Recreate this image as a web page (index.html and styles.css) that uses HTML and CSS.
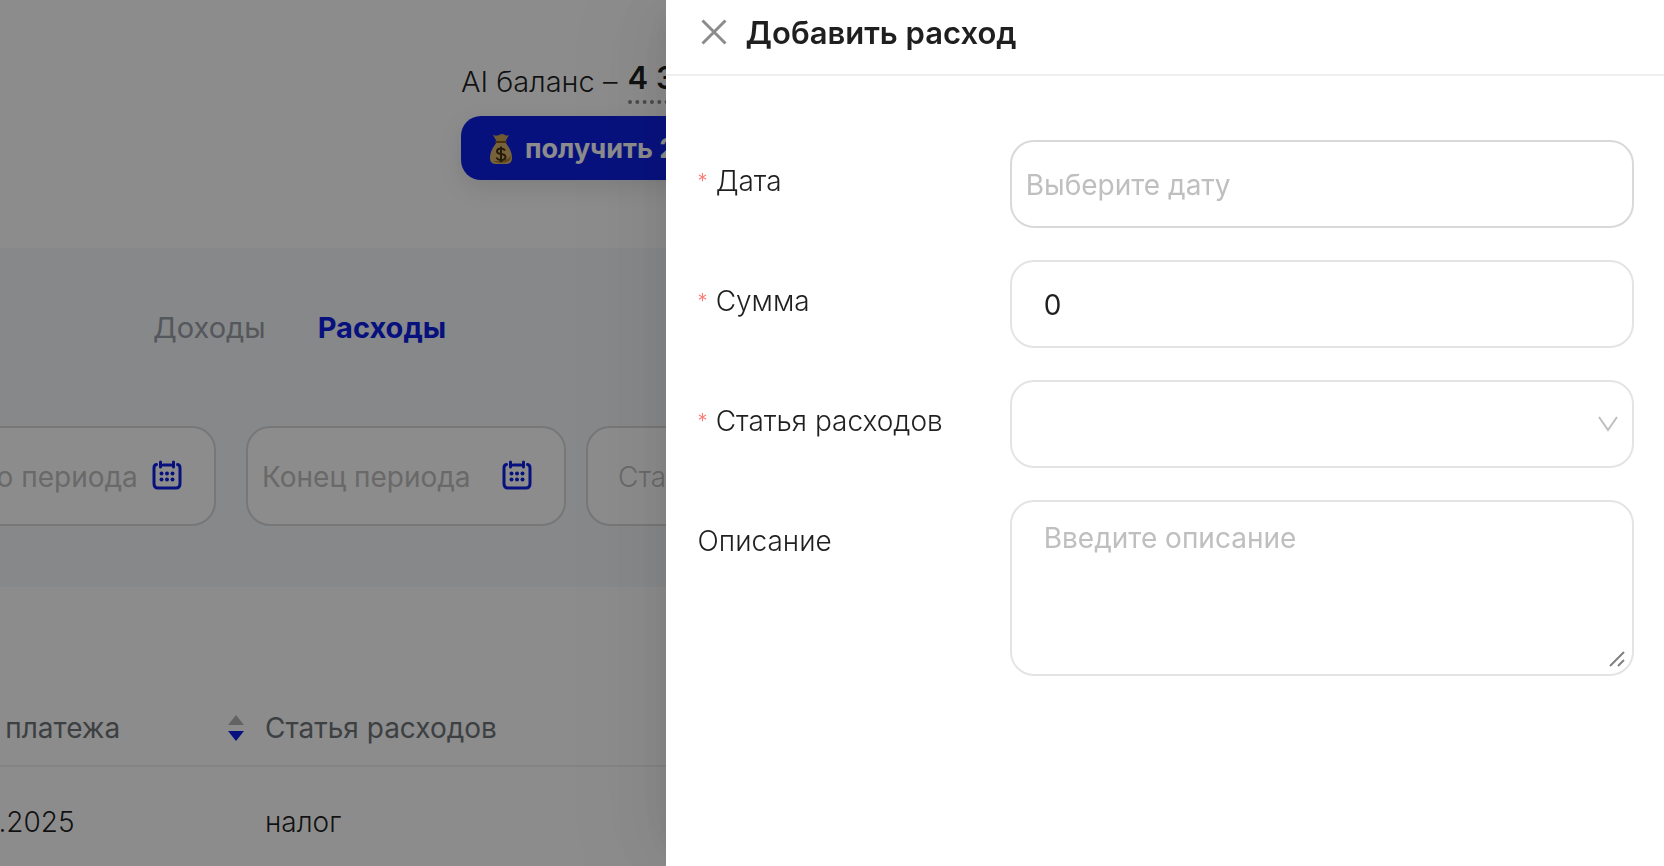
FILE: index.html
```html
<!DOCTYPE html>
<html lang="ru">
  <head>
    <meta charset="utf-8" />
    <title>Добавить расход</title>
    <link rel="stylesheet" href="styles.css">
  </head>
  <body>
    <main class="page">
      <header class="balance">
        <p class="balance-line">AI баланс – <strong class="amount">4 3</strong></p>
        <button type="button" class="bonus-button">
          <svg class="bag" viewBox="0 0 24 32" aria-hidden="true">
            <path d="M4 2 Q8 3 10 2 Q13 0 16 2 Q18 3 20 2 L16 9 H8 Z" fill="#c9a35a" />
            <path d="M8 9 H16 C20 14 23 19 23 25 Q23 31 17 31 H7 Q1 31 1 25 C1 19 4 14 8 9 Z" fill="#d9b56c" />
            <path d="M4 28 Q12 32 20 28 Q22 26 22 22 Q20 27 12 28 Q6 28 4 28 Z" fill="#a87c38" />
            <path d="M7 9 H17" stroke="#8a5a18" stroke-width="2" stroke-linecap="round" />
            <path d="M16 17.500 Q15 15.500 12 15.500 Q8 15.500 8 18.500 Q8 20.500 12 21 Q16.500 21.500 16.500 24 Q16.500 27 12 27 Q8.500 27 7.500 24.500 M12 13.500 V29" fill="none" stroke="#42300f" stroke-width="2" />
          </svg>
          получить 2
        </button>
      </header>

      <section class="filters">
        <nav class="tabs">
          <a href="#">Доходы</a>
          <a href="#" class="active">Расходы</a>
        </nav>
        <div class="filter-row">
          <div class="range">
            <div class="date-filter">
              <input type="text" placeholder="Начало периода" aria-label="Начало периода">
              <svg class="calendar" viewBox="0 0 30 30" aria-hidden="true">
                <path d="M4.500 4.500 Q2 5 2 8 V23.500 Q2 28 6 28 H24 Q28 28 28 23.500 V8 Q28 5 25.500 4.500 M11 5 H19 M8.500 2 V7 M21.500 2 V7" />
                <g>
                  <circle cx="9.500" cy="13.500" r="2" /><circle cx="15" cy="13.500" r="2" /><circle cx="20.500" cy="13.500" r="2" />
                  <circle cx="9.500" cy="19.500" r="2" /><circle cx="15" cy="19.500" r="2" /><circle cx="20.500" cy="19.500" r="2" />
                </g>
              </svg>
            </div>
            <div class="date-filter">
              <input type="text" placeholder="Конец периода" aria-label="Конец периода">
              <svg class="calendar" viewBox="0 0 30 30" aria-hidden="true">
                <path d="M4.500 4.500 Q2 5 2 8 V23.500 Q2 28 6 28 H24 Q28 28 28 23.500 V8 Q28 5 25.500 4.500 M11 5 H19 M8.500 2 V7 M21.500 2 V7" />
                <g>
                  <circle cx="9.500" cy="13.500" r="2" /><circle cx="15" cy="13.500" r="2" /><circle cx="20.500" cy="13.500" r="2" />
                  <circle cx="9.500" cy="19.500" r="2" /><circle cx="15" cy="19.500" r="2" /><circle cx="20.500" cy="19.500" r="2" />
                </g>
              </svg>
            </div>
          </div>
          <select class="type-filter" aria-label="Статья расходов">
            <option>Статья</option>
          </select>
        </div>
      </section>

      <table class="expenses">
        <thead>
          <tr>
            <th class="date-column">
              <div class="sortable">
                Дата платежа
                <svg class="sorter" viewBox="0 0 16 26" aria-hidden="true">
                  <path class="up" d="M8 0 L16 10 H0 Z" />
                  <path class="down" d="M0 16 H16 L8 26 Z" />
                </svg>
              </div>
            </th>
            <th>Статья расходов</th>
          </tr>
        </thead>
        <tbody>
          <tr>
            <td class="date-cell">01.10.2025</td>
            <td>налог</td>
          </tr>
        </tbody>
      </table>
    </main>

    <div class="mask"></div>

    <aside class="drawer">
      <header class="drawer-header">
        <button type="button" class="close" aria-label="Закрыть">
          <svg viewBox="0 0 26 26" aria-hidden="true">
            <path d="M1.500 1.500 L24.500 24.500 M24.500 1.500 L1.500 24.500" />
          </svg>
        </button>
        <h1>Добавить расход</h1>
      </header>

      <form class="expense-form">
        <div class="form-item">
          <label for="date" class="required">Дата</label>
          <input id="date" class="control date" type="text" placeholder="Выберите дату">
        </div>
        <div class="form-item">
          <label for="sum" class="required">Сумма</label>
          <input id="sum" class="control" type="text" value="0">
        </div>
        <div class="form-item">
          <label for="type" class="required">Статья расходов</label>
          <div class="control-wrap">
            <select id="type" class="control">
              <option></option>
            </select>
            <svg class="arrow" viewBox="0 0 20 16" aria-hidden="true">
              <path d="M1 1 L10 14 L19 1" />
            </svg>
          </div>
        </div>
        <div class="form-item">
          <label for="description">Описание</label>
          <div class="control-wrap">
            <textarea id="description" class="control" placeholder="Введите описание"></textarea>
            <svg class="resizer" viewBox="0 0 16 16" aria-hidden="true">
              <path d="M1 15 L15 1 M9 15 L15 9" />
            </svg>
          </div>
        </div>
      </form>
    </aside>
  </body>
</html>
```
FILE: styles.css
```css
* {
  box-sizing: border-box;
}

body {
  margin: 0;
  min-height: 100vh;
  overflow: hidden;
  font-family: Inter, "Liberation Sans", sans-serif;
  font-size: 28px;
  font-weight: 300;
  line-height: 40px;
  color: rgba(0, 0, 0, 0.88);
  background-color: #fff;
}

input,
select,
textarea,
button {
  font: inherit;
  color: inherit;
}

/* Page under the drawer, scrolled to the right */

.page {
  height: 100vh;
  margin-left: -104px;
  overflow: hidden;
}

.balance {
  height: 248px;
  padding: 58px 0 0 565px;
}

.balance-line {
  margin: 0 0 10px;
  height: 48px;
  font-size: 29px;
  line-height: 48px;
  white-space: nowrap;
}

.amount {
  display: inline-block;
  height: 46px;
  margin-left: 2px;
  font-size: 31px;
  line-height: 40px;
  font-weight: 600;
  vertical-align: top;
  border-bottom: 4px dotted #888;
}

.bonus-button {
  display: flex;
  align-items: center;
  gap: 12px;
  width: 320px;
  height: 64px;
  padding: 2px 28px 0;
  border: 0;
  border-radius: 20px;
  font-size: 27px;
  font-weight: 700;
  color: #fff;
  background-color: #0c20e6;
  box-shadow: 0 8px 24px rgba(0, 0, 0, 0.1);
  white-space: nowrap;
}

.bag {
  width: 24px;
  height: 32px;
}

.filters {
  height: 339px;
  padding-top: 60px;
  background-color: #f4f7fa;
}

.tabs {
  display: flex;
  gap: 52px;
  padding-left: 257px;
  margin-bottom: 78px;
}

.tabs a {
  color: #9a9fa6;
  font-size: 29px;
  font-weight: 400;
  text-decoration: none;
}

.tabs a.active {
  font-weight: 700;
  color: #0c20e6;
}

.filter-row {
  display: flex;
  gap: 20px;
}

.range {
  display: flex;
  gap: 30px;
}

.date-filter,
.type-filter {
  width: 320px;
  height: 100px;
  border: 2px solid #d9d9d9;
  border-radius: 24px;
  background-color: #fff;
}

.date-filter {
  display: flex;
  align-items: center;
  padding: 0 32px 2px 14px;
}

.date-filter input {
  flex: 1;
  min-width: 0;
  padding: 4px 0 0;
  border: 0;
  background: none;
  font-weight: 400;
}

.type-filter {
  padding: 2px 30px 0;
  color: #bfbfbf;
  appearance: none;
}

.calendar {
  width: 30px;
  height: 30px;
  fill: #0c20e6;
}

.calendar path {
  fill: none;
  stroke: #0c20e6;
  stroke-width: 3;
  stroke-linecap: round;
}

.expenses {
  width: 100%;
  margin: 102px 0 0 28px;
  border-collapse: collapse;
  table-layout: fixed;
}

.expenses th,
.expenses td {
  padding: 0 16px;
  text-align: left;
  border-bottom: 2px solid #f0f0f0;
}

.expenses th {
  height: 77px;
  padding-top: 2px;
  font-weight: 400;
  color: #70757a;
}

.expenses td {
  height: 112px;
}

.expenses .date-column {
  width: 325px;
  padding: 2px 5px 0 6px;
}

.expenses .date-cell {
  padding-left: 13px;
}

.sortable {
  display: flex;
  align-items: center;
  justify-content: space-between;
}

.sorter {
  width: 16px;
  height: 26px;
}

.sorter .up {
  fill: #b5b5b5;
}

.sorter .down {
  fill: #0c20e6;
}

.mask {
  position: fixed;
  inset: 0;
  background-color: rgba(0, 0, 0, 0.45);
}

/* Drawer */

.drawer {
  position: fixed;
  top: 0;
  right: 0;
  bottom: 0;
  width: 60%;
  background-color: #fff;
  box-shadow: -12px 0 32px -16px rgba(0, 0, 0, 0.08),
    -18px 0 56px 0 rgba(0, 0, 0, 0.05), -24px 0 96px 32px rgba(0, 0, 0, 0.03);
}

.drawer-header {
  display: flex;
  align-items: center;
  gap: 19px;
  height: 76px;
  padding: 0 35px 10px;
  border-bottom: 2px solid #f0f0f0;
}

.drawer-header h1 {
  margin: 0;
  padding-top: 2px;
  font-size: 31px;
  font-weight: 600;
}

.close {
  display: flex;
  padding: 0;
  border: 0;
  background: none;
}

.close svg {
  width: 26px;
  height: 26px;
  fill: none;
  stroke: #8c8c8c;
  stroke-width: 3;
}

.expense-form {
  display: grid;
  gap: 32px;
  padding: 64px 30px 0 32px;
}

.form-item {
  display: grid;
  grid-template-columns: 1fr 2fr;
  align-items: start;
}

.form-item label {
  display: flex;
  align-items: center;
  height: 82px;
}

.form-item .required::before {
  content: "*";
  margin-right: 8px;
  font-size: 20px;
  color: #ff7875;
}

.control-wrap {
  display: grid;
  position: relative;
}

.control {
  display: block;
  width: 100%;
  height: 88px;
  padding: 2px 32px 0;
  border: 2px solid #e4e4e4;
  border-radius: 24px;
  background-color: #fff;
  font-weight: 400;
  appearance: none;
}

.control.date {
  padding: 2px 14px 0;
  border-color: #d9d9d9;
}

textarea.control {
  height: 176px;
  padding-top: 16px;
  resize: none;
}

::placeholder {
  color: #bfbfbf;
  opacity: 1;
}

.arrow {
  position: absolute;
  top: 36px;
  right: 16px;
  width: 20px;
  height: 16px;
  fill: none;
  stroke: #bfbfbf;
  stroke-width: 2;
}

.resizer {
  position: absolute;
  right: 9px;
  bottom: 9px;
  width: 16px;
  height: 16px;
  fill: none;
  stroke: #808080;
  stroke-width: 2;
}
```
